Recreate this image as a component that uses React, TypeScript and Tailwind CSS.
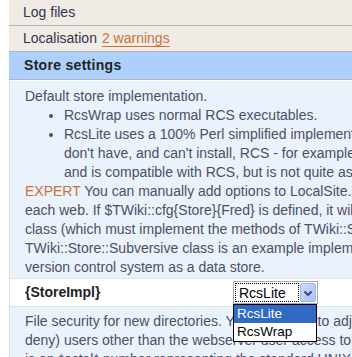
import React from 'react';

const sectionRows = [
  { label: 'Log files' },
  { label: 'Localisation', warn: '2 warnings' },
];

const topLines = [
  'RcsLite uses a 100% Perl simplified implementation of RCS. RcsLite is useful if you',
];

function SelectBox() {
  return (
    <div className="relative">
      <div className="flex h-[23px] items-center border border-[#a5acb2] bg-white p-[1px]">
        <div className="flex h-[19px] w-[64px] items-center border border-dotted border-black pl-[3px] text-[14px] leading-none text-black">
          RcsLite
        </div>
        <div className="ml-[1px] flex h-[19px] w-[16px] items-center justify-center rounded-[2px] border border-[#9fb5ec] bg-gradient-to-br from-[#c9dafd] to-[#a9c2f6]">
          <svg width="12" height="12" viewBox="0 0 12 12">
            <polyline points="2.5,4.5 6,8 9.5,4.5" fill="none" stroke="#4f3d8c" strokeWidth="2" />
          </svg>
        </div>
      </div>
      {/* open dropdown list */}
      <div className="absolute left-0 top-[23px] z-10 w-[84px] border border-black bg-white text-[13.5px] leading-[18px]">
        <div className="bg-[#316ac5] pl-[3px] text-white">RcsLite</div>
        <div className="pl-[3px] text-black">RcsWrap</div>
      </div>
    </div>
  );
}

export default function App() {
  return (
    <div className="relative h-[357px] w-[352px] overflow-hidden bg-white font-['Liberation_Sans',Arial,sans-serif] text-[14px]">
      <div className="ml-[9px] w-[720px]">
        {sectionRows.map((row) => (
          <div
            key={row.label}
            className="h-[26px] border-b border-[#b4b4b4] bg-[#f0ebe5] pl-[14px] leading-[25px] text-[#34344a]"
          >
            {row.label}
            {row.warn && (
              <span className="ml-[5px] text-[#c8723a] underline underline-offset-[3px]">{row.warn}</span>
            )}
          </div>
        ))}
        <div className="h-[28px] border-b border-[#b4b4b4] bg-[#aed0fc] pl-[15px] font-bold leading-[27px] tracking-[0.3px] text-[#222]">
          Store settings
        </div>

        <div className="mt-[1px] whitespace-nowrap border-l border-[#dcdcdc] bg-[#eaf2fb] pb-[1px] pl-[15px] pt-[6px] leading-[19px] text-[#4e4e68]">
          <div>Default store implementation.</div>
          <ul className="list-disc pl-[39px]">
            <li>RcsWrap uses normal RCS executables.</li>
            <li>
              {topLines[0]}
              <br />
              don't have, and can't install, RCS - for example, on a hosted platform. It will work,
              <br />
              and is compatible with RCS, but is not quite as fast.
            </li>
          </ul>
          <div>
            <span className="text-[#c8723a]">EXPERT</span> You can manually add options to LocalSite.cfg to select a
            different store for
          </div>
          <div>each web. If $TWiki::cfg{'{'}Store{'}'}{'{'}Fred{'}'} is defined, it will be taken as the name of a perl</div>
          <div>class (which must implement the methods of TWiki::Store::RcsFile). The</div>
          <div>TWiki::Store::Subversive class is an example implementation using the Subversion</div>
          <div>version control system as a data store.</div>
        </div>

        <div className="flex h-[29px] items-center border-y border-[#e2e2e2] border-l-[#dcdcdc] border-l bg-white pl-[15px]">
          <div className="w-[208px] font-bold text-[#222]">{'{StoreImpl}'}</div>
          <SelectBox />
        </div>

        <div className="whitespace-nowrap border-l border-[#dcdcdc] bg-[#eaf2fb] pl-[15px] pt-[5px] leading-[19px] text-[#4e4e68]">
          <div>File security for new directories. You may have to adjust these permissions to allow (or</div>
          <div>deny) users other than the webserver user access to directories that TWiki creates. This</div>
          <div>is an *octal* number representing the standard UNIX permissions</div>
        </div>
      </div>
    </div>
  );
}
